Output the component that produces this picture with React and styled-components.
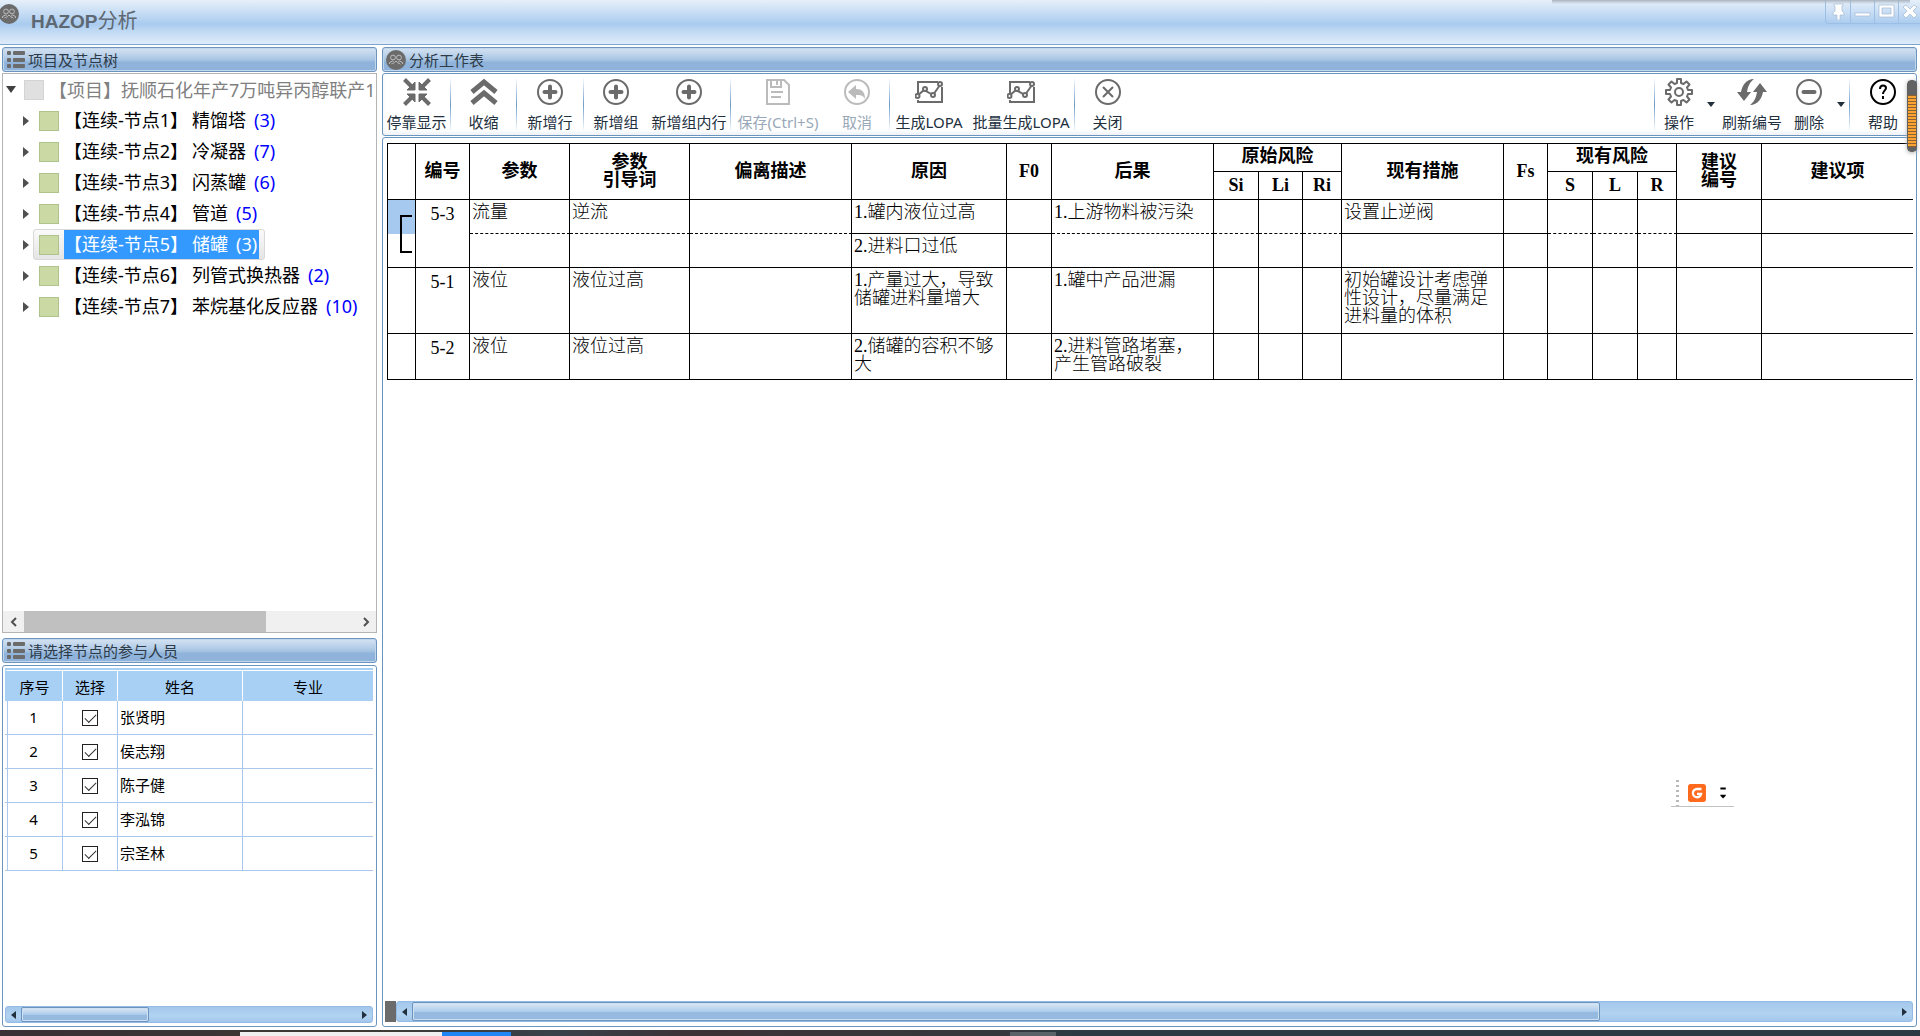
import React from "react";
import styled, { createGlobalStyle, css } from "styled-components";

const sans = `"Noto Sans", "Noto Sans CJK SC", sans-serif`;

const GlobalStyle = createGlobalStyle`
  * {
    box-sizing: border-box;
  }
  body {
    margin: 0;
    overflow: hidden;
    background: #ffffff;
    font-family: ${sans};
    font-size: 15px;
    color: #000000;
  }
  button {
    padding: 0;
    border: 0;
    background: none;
    font: inherit;
    color: inherit;
  }
  svg {
    display: block;
  }
`;

const Window = styled.div`
  position: relative;
  display: flex;
  flex-direction: column;
  height: 100vh;
`;

/* title bar */
const TitleBar = styled.header`
  display: flex;
  flex: none;
  align-items: flex-start;
  height: 45px;
  border-bottom: 1px solid #7ba4cf;
  background: linear-gradient(#e6eff9 0, #c9def5 12px, #a9cbef 24px, #c3dbf4 32px, #deebf9 44px);
`;
const AppIcon = styled.span`
  margin-top: 4px;
  margin-left: -1px;
`;
const Title = styled.h1`
  flex: 1;
  margin: 0 0 0 12px;
  font-family: "Liberation Sans", "Noto Sans CJK SC", sans-serif;
  font-size: 19px;
  line-height: 43px;
  color: #5d6873;
  & span {
    font-size: 20px;
    font-weight: normal;
  }
`;
const WindowButtons = styled.div`
  display: flex;
  height: 24px;
  border: 1px solid #9dbfe6;
  border-width: 0 0 1px 1px;
  border-bottom-left-radius: 4px;
`;
const WindowButton = styled.button`
  display: flex;
  align-items: center;
  justify-content: center;
  width: 24px;
  & + & {
    border-left: 1px solid #9dbfe6;
  }
  &:last-child {
    width: 22px;
  }
`;
const TopShadow = styled.div`
  position: absolute;
  top: 0;
  right: 10px;
  width: 358px;
  height: 4px;
  background: linear-gradient(#a9b3bf, rgba(190, 208, 230, 0));
`;

/* panels */
const Main = styled.main`
  display: grid;
  flex: 1;
  grid-template-columns: 375px minmax(0, 1fr);
  gap: 5px;
  min-height: 0;
  padding: 2px 3px 3px 2px;
`;
const Column = styled.section`
  display: flex;
  flex-direction: column;
  min-width: 0;
  min-height: 0;
`;
const PanelHeader = styled.h2`
  display: flex;
  flex: none;
  align-items: center;
  gap: 3px;
  height: 25px;
  margin: 0 0 1px;
  padding: 0 3px;
  border: 1px solid #6b94bf;
  border-radius: 3px;
  background: linear-gradient(#d5e3f2 0, #b4cde8 9px, #a0c0e1 13px, #8fb3da 14px, #8fb3da 100%);
  box-shadow: inset 0 0 0 1px #c3d7ec;
  font-size: 15px;
  font-weight: normal;
  line-height: 22px;
  color: #2d3a48;
`;
const Panel = styled.div`
  display: flex;
  flex-direction: column;
  min-height: 0;
  border: 1px solid #6b94bf;
  border-radius: 3px;
  background: #ffffff;
`;

/* node tree */
const TreeBox = styled.div`
  display: flex;
  flex: 563 1 0;
  flex-direction: column;
  min-height: 0;
  margin-bottom: 5px;
  border: 1px solid #b4b4b4;
`;
const Tree = styled.ul`
  flex: 1;
  margin: 0;
  padding: 0;
  overflow: hidden;
  list-style: none;
  font-size: 18px;
  white-space: nowrap;
`;
const TreeItem = styled.li`
  display: flex;
  align-items: center;
  height: 31px;
  padding-left: ${(p) => (p.$root ? "3px" : "20px")};
  color: ${(p) => (p.$root ? "#808080" : "#000000")};
`;
const Expander = styled.button`
  width: ${(p) => (p.$root ? "18px" : "10px")};
`;
const Node = styled.span`
  display: flex;
  align-items: center;
  height: 31px;
  padding: 0 5px 0 6px;
  border: 1px solid transparent;
  border-width: 1px 1px 1px 0;
  ${(p) =>
    p.$selected &&
    css`
      border: 1px solid #d9d9d9;
      border-radius: 3px;
      padding-left: 5px;
      background: linear-gradient(#fafafa, #e5e5e5);
    `}
`;
const RootNode = styled.span`
  display: flex;
  align-items: center;
  line-height: 28px;
`;
const Swatch = styled.span`
  width: 20px;
  height: 20px;
  margin-right: 5px;
  border: 1px solid ${(p) => (p.$gray ? "#d4d4d4" : "#afc48c")};
  background: ${(p) => (p.$gray ? "#e0e0e0" : "#cbd9a4")};
`;
const NodeText = styled.span`
  display: flex;
  gap: 4px;
  height: 29px;
  line-height: 29px;
  color: ${(p) => (p.$selected ? "#ffffff" : "#000000")};
  background: ${(p) => (p.$selected ? "#3399ff" : "none")};
  padding-right: 2px;
`;
const Count = styled.span`
  margin-left: 4px;
  color: ${(p) => (p.$selected ? "#ffffff" : "#0000ff")};
`;
const PlainScroll = styled.div`
  display: flex;
  flex: none;
  height: 21px;
  background: #f0f0f0;
`;
const PlainArrow = styled.button`
  display: flex;
  align-items: center;
  justify-content: center;
  width: 21px;
`;
const PlainTrack = styled.div`
  flex: 1;
`;
const PlainThumb = styled.div`
  width: 73%;
  height: 100%;
  background: #c0c0c0;
`;

/* people grid */
const PeoplePanel = styled(Panel)`
  flex: 358 1 0;
  margin-top: 1px;
  padding: 2px 3px 3px 2px;
`;
const PeopleTable = styled.table`
  width: 100%;
  border-spacing: 0;
  table-layout: fixed;
  border-top: 2px solid #a8d0f5;
`;
const PeopleHead = styled.th`
  height: 31px;
  padding: 0;
  border-top: 1px solid #ffffff;
  border-right: 1px solid #ffffff;
  background: #a8d0f5;
  font-weight: normal;
  &:first-child {
    border-left: 2px solid #a8d0f5;
  }
  &:last-child {
    border-right: 0;
  }
`;
const PeopleCell = styled.td`
  height: 34px;
  padding: 0 2px 2px;
  border-right: 1px solid #a9c8ec;
  border-bottom: 1px solid #a9c8ec;
  line-height: 20px;
  text-align: ${(p) => (p.$center ? "center" : "left")};
  &:last-child {
    border-right: 0;
  }
`;
// the body lines start two pixels in from the blue header
const NumberCell = styled(PeopleCell)`
  background: linear-gradient(90deg, #ffffff 2px, #a9c8ec 2px, #a9c8ec 3px, #ffffff 3px);
`;
const Check = styled.input`
  display: block;
  appearance: none;
  width: 16px;
  height: 16px;
  margin: 2px auto 0;
  border: 1px solid #222222;
  background: #ffffff;
  &:checked::after {
    content: "";
    display: block;
    width: 10px;
    height: 5px;
    margin: 3px 0 0 2px;
    border: solid #333333;
    border-width: 0 0 1px 1px;
    transform: rotate(-45deg);
  }
`;

/* blue scroll bars */
const BlueScroll = styled.div`
  display: flex;
  flex: none;
  height: ${(p) => p.$height}px;
  margin-top: auto;
`;
const Grip = styled.div`
  width: 11px;
  background: #6b6b6b;
`;
const BlueTrack = styled.div`
  display: flex;
  flex: 1;
  border: 1px solid #93bbe6;
  border-radius: 3px;
  background: linear-gradient(#a3c7ec, #b2d3f1 60%, #a3c7ec);
`;
const BlueArrow = styled.button`
  display: flex;
  align-items: center;
  justify-content: center;
  width: 15px;
`;
const BlueRail = styled.div`
  flex: 1;
`;
const BlueThumb = styled.div`
  width: ${(p) => p.$size};
  height: 100%;
  border: 1px solid #6b94bf;
  border-radius: 2px;
  background: linear-gradient(#dbe8f5, #adcceb 50%, #96badf 51%, #96badf);
  box-shadow: inset 0 0 0 1px #cfe0f2;
`;

/* toolbar */
const Toolbar = styled(Panel)`
  flex: none;
  flex-direction: row;
  height: 63px;
  margin-bottom: 1px;
  box-shadow: inset 0 -3px 4px #eef3f9;
`;
const Spacer = styled.div`
  flex: 1;
`;
const Separator = styled.div`
  width: 1px;
  margin: 3px 0;
  background: linear-gradient(#ffffff, #6f9cca 50%, #ffffff);
`;
const ToolButton = styled.button`
  display: flex;
  flex-direction: column;
  align-items: center;
  width: ${(p) => p.$width || 65}px;
  padding-top: 4px;
  line-height: 20px;
  color: #22303e;
  white-space: nowrap;
  & svg {
    margin-bottom: 6px;
  }
  &:disabled {
    color: #98a8b8;
  }
  &:disabled svg {
    opacity: 0.45;
  }
`;
const DropButton = styled.button`
  display: flex;
  align-items: center;
  justify-content: center;
  width: 16px;
`;

/* worksheet */
const SheetPanel = styled(Panel)`
  flex: 1;
  padding: 5px 3px 4px 2px;
`;
const SheetWrap = styled.div`
  padding-left: 2px;
  overflow: hidden;
`;
const Sheet = styled.table`
  width: 100%;
  border-spacing: 0;
  table-layout: fixed;
  border-left: 1px solid #000000;
  border-top: 1px solid #000000;
  font-family: "Liberation Serif", "Noto Sans CJK SC", serif;
  font-size: 18px;
  line-height: 18px;
`;
const HeadCell = styled.th`
  padding: 0 0 2px;
  border-right: 1px solid #000000;
  border-bottom: 1px solid #000000;
  font-weight: bold;
  &.last {
    border-right: 0;
  }
`;
const GroupHead = styled(HeadCell)`
  padding-bottom: 4px;
`;
const Row = styled.tr`
  height: ${(p) => p.$height}px;
`;
const Cell = styled.td`
  padding: 3px 2px 0;
  border-right: 1px solid #000000;
  border-bottom: 1px ${(p) => (p.$dashed ? "dashed" : "solid")} #000000;
  font-weight: 300;
  vertical-align: top;
  &:last-child {
    border-right: 0;
  }
`;
const CodeCell = styled(Cell)`
  padding-top: 5px;
  text-align: center;
`;
const MarkCell = styled(Cell)`
  padding: 0 0 0 12px;
  border-bottom: ${(p) => (p.$active ? "0" : "1px solid #000000")};
  background: ${(p) => (p.$active ? "#a6c9ef" : "none")};
  background-clip: padding-box;
  vertical-align: ${(p) => (p.$active ? "bottom" : "top")};
`;
const GroupLine = styled.div`
  width: 12px;
  height: 19px;
  border: solid #000000;
  border-width: ${(p) => (p.$end ? "0 0 2px 2px" : "2px 0 0 2px")};
`;

/* floating pieces */
const Gauge = styled.div`
  position: absolute;
  top: 80px;
  right: 3px;
  width: 10px;
  height: 72px;
  border: 1px solid #626262;
  border-radius: 4px;
  background:
    linear-gradient(#626262 14px, transparent 14px, transparent 66px, #626262 66px),
    repeating-linear-gradient(#fda331 0 2px, #8a6330 2px 3px);
  box-shadow: 0 1px 4px #b5b5b5;
`;
const InputBar = styled.div`
  position: absolute;
  right: 186px;
  bottom: 229px;
  display: flex;
  align-items: center;
  gap: 9px;
  width: 63px;
  height: 28px;
  padding: 0 5px;
  border-bottom: 1px solid #c2c2c2;
`;
const Dots = styled.span`
  width: 3px;
  height: 26px;
  background: repeating-linear-gradient(#b9b9b9 0 2px, #ffffff 2px 5px);
`;

const TaskBar = styled.footer`
  display: flex;
  flex: none;
  height: 6px;
  background: linear-gradient(90deg, #3a3035, #3b3a34 20%, #38424a 29%, #3d3236 36%, #35393c 52%, #2b3a42 56%);
`;
const TaskBlock = styled.span`
  width: ${(p) => p.$width};
  height: 4px;
  margin-top: 2px;
  background: ${(p) => p.$color};
`;

const gray = "#6b6b6b";

const PeopleIcon = () => (
  <svg width="20" height="20" viewBox="0 0 20 20">
    <circle cx="10" cy="10" r="10" fill={gray} />
    <g fill="none" stroke="#bdbdbd" strokeWidth="1">
      <circle cx="7" cy="7.5" r="2.4" />
      <circle cx="13" cy="7.5" r="2.4" />
      <path d="M3.5 14v-1.5l3-1.5 1.8 1.6 1.7-1.6 1.8 1.6 1.8-1.6 2.9 1.5V14M5.5 14.2l1-1.2 1.2 1.2M12.2 14.2l1-1.2 1.2 1.2" />
    </g>
  </svg>
);
const ListIcon = () => (
  <svg width="19" height="18" viewBox="0 0 19 18" fill={gray}>
    {[0, 7, 13].map((y) => (
      <g key={y}>
        <rect x="1" y={y} width="4" height="4" rx="1" />
        <rect x="7" y={y} width="12" height="4" rx="1" />
      </g>
    ))}
  </svg>
);
const Triangle = ({ d = "M0 0h8L4 5z", w = 8, h = 5, color = "#22303e" }) => (
  <svg width={w} height={h}>
    <path d={d} fill={color} />
  </svg>
);

const Icon = ({ children }) => (
  <svg width="28" height="28" viewBox="0 0 28 28" fill="none" stroke={gray} strokeWidth="2">
    {children}
  </svg>
);
const icons = {
  dock: (
    <Icon>
      {[0, 90, 180, 270].map((angle) => (
        <g key={angle} transform={`rotate(${angle} 14 14)`}>
          <path d="M1.5 1.5l7 7" strokeWidth="4" />
          <path d="M12 4v8H4z" fill={gray} strokeWidth="1" />
        </g>
      ))}
    </Icon>
  ),
  collapse: (
    <Icon>
      <path d="M2 14L14 4l12 10M2 25l12-10 12 10" strokeWidth="5" />
    </Icon>
  ),
  plus: (
    <Icon>
      <circle cx="14" cy="14" r="12" />
      <path d="M8.5 14h11M14 8.5v11" strokeWidth="4" strokeLinecap="round" />
    </Icon>
  ),
  save: (
    <Icon>
      <path d="M3 2h17l5 5v19H3zM7 2v7h10V2M13 3v4M7 14h12M7 19h10" />
    </Icon>
  ),
  undo: (
    <Icon>
      <circle cx="14" cy="14" r="12" />
      <path d="M5 14l8-7v4c6 0 9 3 9 10-2-4-5-4-9-4v4z" fill={gray} stroke="none" />
    </Icon>
  ),
  lopa: (
    <Icon>
      <path d="M23 4H3v12M3 22v2h24V9" />
      <path d="M2 18l7-6 9 5 7-10" />
      <g fill="#ffffff">
        <circle cx="2.5" cy="18" r="2" />
        <circle cx="10" cy="11" r="2" />
        <circle cx="18" cy="17" r="2" />
        <circle cx="25" cy="6" r="2" />
      </g>
    </Icon>
  ),
  close: (
    <Icon>
      <circle cx="14" cy="14" r="12" />
      <path d="M9 9l10 10M19 9L9 19" />
    </Icon>
  ),
  gear: (
    <Icon>
      <path
        strokeLinejoin="round"
        d="M12 1h4v4l2.5 1 3-2.500 3 3-2.500 3 1 2.500h4v4h-4l-1 2.500 2.500 3-3 3-3-2.500-2.500 1v4h-4v-4l-2.500-1-3 2.500-3-3 2.500-3-1-2.500H1v-4h4l1-2.500-2.500-3 3-3 3 2.500L12 5z"
      />
      <circle cx="14" cy="14" r="4" />
    </Icon>
  ),
  refresh: (
    <svg width="30" height="28" viewBox="0 0 30 28" fill={gray}>
      <path d="M17 1C9 1 5 8 4 14H0l7 9 7-9h-4C11 8 13 4 17 1z" />
      <path d="M13 27c8 0 12-7 13-13h4l-7-9-7 9h4c-1 6-3 10-7 13z" />
    </svg>
  ),
  minus: (
    <Icon>
      <circle cx="14" cy="14" r="12" />
      <path d="M8.5 14h11" strokeWidth="4" strokeLinecap="round" />
    </Icon>
  ),
  help: (
    <svg width="28" height="28" viewBox="0 0 28 28" fill="none" stroke="#000000" strokeWidth="2">
      <circle cx="14" cy="14" r="12" />
      <path d="M11 11c0-5 6-4 6-1 0 2-3 3-3 6M14 18v3" />
    </svg>
  ),
};

const tools = [
  { icon: "dock", label: "停靠显示", width: 67, end: true },
  { icon: "collapse", label: "收缩", end: true },
  { icon: "plus", label: "新增行", width: 66, end: true },
  { icon: "plus", label: "新增组", width: 64 },
  { icon: "plus", label: "新增组内行", width: 82, end: true },
  { icon: "save", label: "保存(Ctrl+S)", width: 94, disabled: true },
  { icon: "undo", label: "取消", width: 64, disabled: true, end: true },
  { icon: "lopa", label: "生成LOPA", width: 78 },
  { icon: "lopa", label: "批量生成LOPA", width: 106, end: true },
  { icon: "close", label: "关闭" },
];

const nodes = [
  { tag: "【连续-节点1】", name: "精馏塔", count: 3 },
  { tag: "【连续-节点2】", name: "冷凝器", count: 7 },
  { tag: "【连续-节点3】", name: "闪蒸罐", count: 6 },
  { tag: "【连续-节点4】", name: "管道", count: 5 },
  { tag: "【连续-节点5】", name: "储罐", count: 3, selected: true },
  { tag: "【连续-节点6】", name: "列管式换热器", count: 2 },
  { tag: "【连续-节点7】", name: "苯烷基化反应器", count: 10 },
];

const people = ["张贤明", "侯志翔", "陈子健", "李泓锦", "宗圣林"];

const columnWidths = [28, 54, 100, 120, 162, 155, 45, 162, 45, 44, 39, 162, 44, 45, 45, 39, 85];

const BlueScrollBar = ({ height, size, grip }) => (
  <BlueScroll $height={height}>
    {grip && <Grip />}
    <BlueTrack>
      <BlueArrow aria-label="向左滚动">
        <Triangle d="M5 0v8L0 4z" w={5} h={8} />
      </BlueArrow>
      <BlueRail>
        <BlueThumb $size={size} />
      </BlueRail>
      <BlueArrow aria-label="向右滚动">
        <Triangle d="M0 0v8l5-4z" w={5} h={8} />
      </BlueArrow>
    </BlueTrack>
  </BlueScroll>
);

const ProjectTree = () => (
  <TreeBox>
    <Tree>
      <TreeItem $root>
        <Expander $root aria-label="折叠">
          <Triangle d="M0 0h10L5 7z" w={10} h={7} color="#404040" />
        </Expander>
        <RootNode>
          <Swatch $gray />
          【项目】抚顺石化年产7万吨异丙醇联产1
        </RootNode>
      </TreeItem>
      {nodes.map((node) => (
        <TreeItem key={node.tag}>
          <Expander aria-label="展开">
            <Triangle d="M0 0v10l6-5z" w={6} h={10} color="#505050" />
          </Expander>
          <Node $selected={node.selected}>
            <Swatch />
            <NodeText $selected={node.selected}>
              <span>{node.tag}</span>
              <span>{node.name}</span>
              <Count $selected={node.selected}>({node.count})</Count>
            </NodeText>
          </Node>
        </TreeItem>
      ))}
    </Tree>
    <PlainScroll>
      <PlainArrow aria-label="向左滚动">
        <svg width="8" height="10" fill="none" stroke="#505050" strokeWidth="2">
          <path d="M6 1L2 5l4 4" />
        </svg>
      </PlainArrow>
      <PlainTrack>
        <PlainThumb />
      </PlainTrack>
      <PlainArrow aria-label="向右滚动">
        <svg width="8" height="10" fill="none" stroke="#505050" strokeWidth="2">
          <path d="M2 1l4 4-4 4" />
        </svg>
      </PlainArrow>
    </PlainScroll>
  </TreeBox>
);

const PeopleGrid = () => (
  <PeoplePanel>
    <PeopleTable>
      <colgroup>
        <col style={{ width: 58 }} />
        <col style={{ width: 55 }} />
        <col style={{ width: 125 }} />
        <col />
      </colgroup>
      <thead>
        <tr>
          <PeopleHead>序号</PeopleHead>
          <PeopleHead>选择</PeopleHead>
          <PeopleHead>姓名</PeopleHead>
          <PeopleHead>专业</PeopleHead>
        </tr>
      </thead>
      <tbody>
        {people.map((name, i) => (
          <tr key={name}>
            <NumberCell $center>{i + 1}</NumberCell>
            <PeopleCell>
              <Check type="checkbox" defaultChecked aria-label={name} />
            </PeopleCell>
            <PeopleCell>{name}</PeopleCell>
            <PeopleCell />
          </tr>
        ))}
      </tbody>
    </PeopleTable>
    <BlueScrollBar height={17} size="38%" />
  </PeoplePanel>
);

const MainToolbar = () => (
  <Toolbar>
    {tools.map((tool) => (
      <React.Fragment key={tool.label}>
        <ToolButton $width={tool.width} disabled={tool.disabled}>
          {icons[tool.icon]}
          {tool.label}
        </ToolButton>
        {tool.end && <Separator />}
      </React.Fragment>
    ))}
    <Spacer />
    <Separator />
    <ToolButton $width={48}>
      {icons.gear}
      操作
    </ToolButton>
    <DropButton aria-label="操作菜单">
      <Triangle />
    </DropButton>
    <ToolButton $width={66}>
      {icons.refresh}
      刷新编号
    </ToolButton>
    <ToolButton $width={48}>
      {icons.minus}
      删除
    </ToolButton>
    <DropButton aria-label="删除菜单">
      <Triangle />
    </DropButton>
    <Separator />
    <ToolButton $width={66}>
      {icons.help}
      帮助
    </ToolButton>
  </Toolbar>
);

const emptyCells = (n, dashed) => Array.from({ length: n }, (_, i) => <Cell key={i} $dashed={dashed} />);

const Worksheet = () => (
  <SheetPanel>
    <SheetWrap>
      <Sheet>
        <colgroup>
          {columnWidths.map((width, i) => (
            <col key={i} style={{ width }} />
          ))}
          <col />
        </colgroup>
        <thead>
          <Row $height={28}>
            <HeadCell rowSpan={2} />
            <HeadCell rowSpan={2}>编号</HeadCell>
            <HeadCell rowSpan={2}>参数</HeadCell>
            <HeadCell rowSpan={2}>
              参数
              <br />
              引导词
            </HeadCell>
            <HeadCell rowSpan={2}>偏离描述</HeadCell>
            <HeadCell rowSpan={2}>原因</HeadCell>
            <HeadCell rowSpan={2}>F0</HeadCell>
            <HeadCell rowSpan={2}>后果</HeadCell>
            <GroupHead colSpan={3}>原始风险</GroupHead>
            <HeadCell rowSpan={2}>现有措施</HeadCell>
            <HeadCell rowSpan={2}>Fs</HeadCell>
            <GroupHead colSpan={3}>现有风险</GroupHead>
            <HeadCell rowSpan={2}>
              建议
              <br />
              编号
            </HeadCell>
            <HeadCell rowSpan={2} className="last">建议项</HeadCell>
          </Row>
          <Row $height={28}>
            {["Si", "Li", "Ri", "S", "L", "R"].map((label) => (
              <HeadCell key={label}>{label}</HeadCell>
            ))}
          </Row>
        </thead>
        <tbody>
          <Row $height={34}>
            <MarkCell $active>
              <GroupLine />
            </MarkCell>
            <CodeCell rowSpan={2}>5-3</CodeCell>
            <Cell $dashed>流量</Cell>
            <Cell $dashed>逆流</Cell>
            <Cell $dashed />
            <Cell>1.罐内液位过高</Cell>
            <Cell />
            <Cell $dashed>1.上游物料被污染</Cell>
            {emptyCells(3, true)}
            <Cell>设置止逆阀</Cell>
            <Cell />
            {emptyCells(3, true)}
            <Cell />
            <Cell />
          </Row>
          <Row $height={34}>
            <MarkCell>
              <GroupLine $end />
            </MarkCell>
            {emptyCells(3)}
            <Cell>2.进料口过低</Cell>
            {emptyCells(12)}
          </Row>
          <Row $height={66}>
            <Cell />
            <CodeCell>5-1</CodeCell>
            <Cell>液位</Cell>
            <Cell>液位过高</Cell>
            <Cell />
            <Cell>1.产量过大，导致储罐进料量增大</Cell>
            <Cell />
            <Cell>1.罐中产品泄漏</Cell>
            {emptyCells(3)}
            <Cell>初始罐设计考虑弹性设计，尽量满足进料量的体积</Cell>
            {emptyCells(6)}
          </Row>
          <Row $height={46}>
            <Cell />
            <CodeCell>5-2</CodeCell>
            <Cell>液位</Cell>
            <Cell>液位过高</Cell>
            <Cell />
            <Cell>2.储罐的容积不够大</Cell>
            <Cell />
            <Cell>2.进料管路堵塞，产生管路破裂</Cell>
            {emptyCells(10)}
          </Row>
        </tbody>
      </Sheet>
    </SheetWrap>
    <BlueScrollBar height={21} size="80%" grip />
  </SheetPanel>
);

const windowIcons = [
  ["固定", "M4 1h9v2h-1v5l2 2v2h-4v5H7v-5H3v-2l2-2V3H4z"],
  ["最小化", "M1 10h15v3H1z"],
  ["最大化", "M1 2h15v12H1zM4 5v6h9V5z"],
  ["关闭窗口", "M2 4l3-2 4 4 4-4 3 2-4 4 4 4-3 3-4-4-4 4-3-3 4-4z"],
];

const App = () => (
  <>
    <GlobalStyle />
    <Window>
      <TitleBar>
        <AppIcon>
          <PeopleIcon />
        </AppIcon>
        <Title>
          HAZOP<span>分析</span>
        </Title>
        <WindowButtons>
          {windowIcons.map(([label, d]) => (
            <WindowButton key={label} aria-label={label}>
              <svg width="17" height="17" viewBox="0 0 17 17">
                <path d={d} fill="#ffffff" fillRule="evenodd" stroke="#a3b9d2" strokeWidth="0.7" />
              </svg>
            </WindowButton>
          ))}
        </WindowButtons>
      </TitleBar>
      <Main>
        <Column>
          <PanelHeader>
            <ListIcon />
            项目及节点树
          </PanelHeader>
          <ProjectTree />
          <PanelHeader>
            <ListIcon />
            请选择节点的参与人员
          </PanelHeader>
          <PeopleGrid />
        </Column>
        <Column>
          <PanelHeader>
            <PeopleIcon />
            分析工作表
          </PanelHeader>
          <MainToolbar />
          <Worksheet />
        </Column>
      </Main>
      <TaskBar>
        <TaskBlock $width="12.5%" />
        <TaskBlock $width="10.5%" $color="#efefef" />
        <TaskBlock $width="3.6%" $color="#2186f5" />
        <TaskBlock $width="26%" />
        <TaskBlock $width="2.4%" $color="#5a6468" />
      </TaskBar>
      <TopShadow />
      <Gauge />
      <InputBar>
        <Dots />
        <svg width="20" height="20" viewBox="0 0 20 20">
          <rect width="20" height="20" rx="3" fill="#ff6a1c" />
          <path
            d="M15 5.5H10a4.6 4.6 0 1 0 4.6 5.5H10"
            fill="none"
            stroke="#ffffff"
            strokeWidth="2.6"
          />
        </svg>
        <svg width="16" height="14" viewBox="0 0 16 14">
          <path d="M6 1h6v2H6zM6 9h6v1l-3 3-3-3z" />
        </svg>
      </InputBar>
    </Window>
  </>
);

export default App;
